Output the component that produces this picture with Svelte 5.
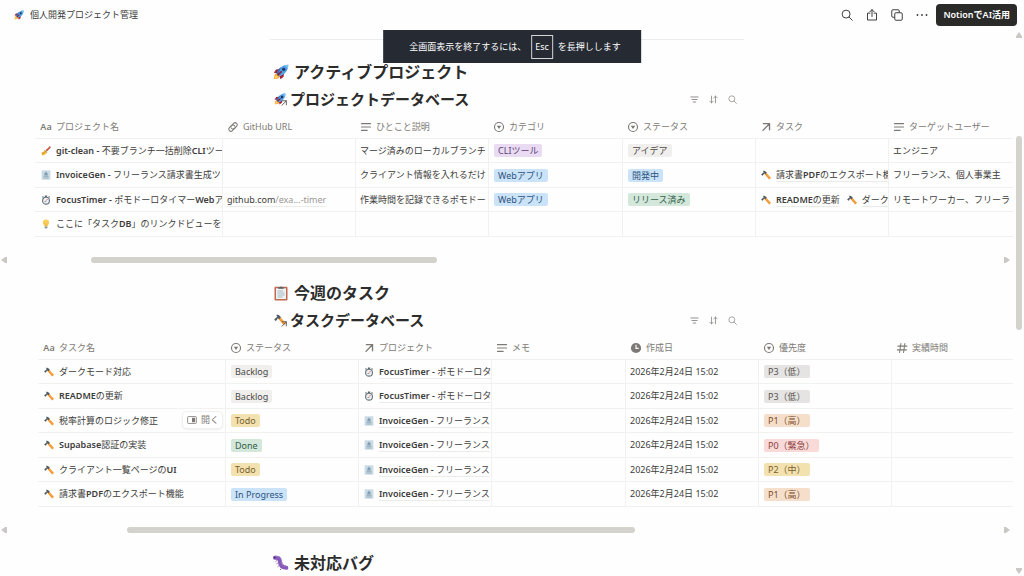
<script>
  const PROJECT_COLUMNS = [
    { icon: "title", name: "プロジェクト名" },
    { icon: "link", name: "GitHub URL" },
    { icon: "text", name: "ひとこと説明" },
    { icon: "select", name: "カテゴリ" },
    { icon: "select", name: "ステータス" },
    { icon: "relation", name: "タスク" },
    { icon: "text", name: "ターゲットユーザー" }
  ];

  const TASK_COLUMNS = [
    { icon: "title", name: "タスク名" },
    { icon: "select", name: "ステータス" },
    { icon: "relation", name: "プロジェクト" },
    { icon: "text", name: "メモ" },
    { icon: "clock", name: "作成日" },
    { icon: "select", name: "優先度" },
    { icon: "number", name: "実績時間" }
  ];

  const title = (icon, text, open = false) => ({ type: "title", icon, text, open });
  const tag = (text, color) => ({ type: "tag", text, color });
  const text = (text = "") => ({ type: "text", text });
  const links = (...items) => ({ type: "links", items });

  const web = tag("Webアプリ", "blue");
  const focus = links({ icon: "stopwatch", text: "FocusTimer - ポモドーロタ" });
  const invoice = links({ icon: "receipt", text: "InvoiceGen - フリーランス" });
  const created = text("2026年2月24日 15:02");

  const sections = [
    {
      icon: "rocket",
      heading: "アクティブプロジェクト",
      database: "プロジェクトデータベース",
      inset: "wide",
      columns: PROJECT_COLUMNS,
      scroll: { start: 8.4, size: 34.7 },
      rows: [
        [
          title("broom", "git-clean - 不要ブランチ一括削除CLIツー"),
          text(),
          text("マージ済みのローカルブランチ"),
          tag("CLIツール", "purple"),
          tag("アイデア", "default"),
          text(),
          text("エンジニア")
        ],
        [
          title("receipt", "InvoiceGen - フリーランス請求書生成ツ"),
          text(),
          text("クライアント情報を入れるだけ"),
          web,
          tag("開発中", "blue"),
          links({ icon: "hammer", text: "請求書PDFのエクスポート機" }),
          text("フリーランス、個人事業主")
        ],
        [
          title("stopwatch", "FocusTimer - ポモドーロタイマーWebア"),
          { type: "url", host: "github.com", path: "/exa...-timer" },
          text("作業時間を記録できるポモドー"),
          web,
          tag("リリース済み", "green"),
          links({ icon: "hammer", text: "READMEの更新" }, { icon: "hammer", text: "ダーク" }),
          text("リモートワーカー、フリーラ")
        ],
        [
          title("bulb", "ここに「タスクDB」のリンクドビューを"),
          text(),
          text(),
          text(),
          text(),
          text(),
          text()
        ]
      ]
    },
    {
      icon: "clipboard",
      heading: "今週のタスク",
      database: "タスクデータベース",
      databaseIcon: "hammer",
      inset: "narrow",
      columns: TASK_COLUMNS,
      scroll: { start: 12, size: 51 },
      rows: [
        ["ダークモード対応", tag("Backlog", "default"), focus, tag("P3（低）", "gray")],
        ["READMEの更新", tag("Backlog", "default"), focus, tag("P3（低）", "gray")],
        ["税率計算のロジック修正", tag("Todo", "yellow"), invoice, tag("P1（高）", "orange"), true],
        ["Supabase認証の実装", tag("Done", "green"), invoice, tag("P0（緊急）", "red")],
        ["クライアント一覧ページのUI", tag("Todo", "yellow"), invoice, tag("P2（中）", "yellow")],
        ["請求書PDFのエクスポート機能", tag("In Progress", "blue"), invoice, tag("P1（高）", "orange")]
      ].map(([name, status, project, priority, open]) => [
        title("hammer", name, open),
        status,
        project,
        text(),
        created,
        priority,
        text()
      ])
    }
  ];

  const pageScroll = { start: 18.4, size: 36.7 };

  // odd entries are the latin runs, which are set heavier than the kana
  const runs = (value) => value.split(/([ -~]+)/);
</script>

{#snippet icon(name)}
  <svg class="icon" viewBox="0 0 16 16" aria-hidden="true">
    {#if name === "rocket"}
      <path d="M1 15c0-3 .6-5.200 2.600-6L7 12.500C6.200 14.400 4 15 1 15z" fill="#f9a53a" />
      <path d="M1.500 14.500c.2-1.700.8-2.800 2-3.300l1.500 1.500c-.6 1.100-1.800 1.700-3.500 1.800z" fill="#ffd45c" />
      <path d="M6.500 5 3 5.400.8 8.700l3.500.6zM11 9.500l-.5 3.500-3.200 2.200-.6-3.500z" fill="#a5243d" />
      <path d="M15.300.7c-4.500 0-7.800 2-10.300 5.800L3.600 9.600l2.800 2.800 3.100-1.400c3.800-2.500 5.800-5.800 5.800-10.300z" fill="#4f9fe6" />
      <path d="M3.600 9.600 5 6.500c.9-1.400 1.900-2.500 3-3.400L5 11z" fill="#2b6cb0" />
      <path d="M15.300.7c-1.400 0-2.700.2-3.900.6l3.300 3.300c.4-1.200.6-2.500.6-3.900z" fill="#7cc0f5" />
      <circle cx="10.700" cy="5.300" r="1.600" fill="#1d3557" />
      <path d="m4 10.800 4.200-4 1 1-4 4.200z" fill="#8d1f38" />
    {:else if name === "hammer"}
      <path d="M5 5.800 7.700 3.400 15.800 12.300 13.200 15z" fill="#f2912f" />
      <path d="m7.200 3.800 8.400 9-.8.700L6.300 4.600z" fill="#ffb04d" />
      <path d="M.2 7.200 2.200 9.300 4.200 7.600 4 6.500 5.500 5.600 6.900 6.800 9.300 4.500 7.800 2.600C6.500 1 4.500.8 2.900 1.500L4.600 3.200 2 5.600z" fill="#4f5b62" />
    {:else if name === "broom"}
      <path d="M14.300.7 15.500 1.900 9.500 8.500 7.800 6.900z" fill="#c8553d" stroke="#c8553d" />
      <path d="M6.500 6.200 10 9.700C8.800 12.800 6 14.500 2.300 15L.8 12.500 1 10.300C3.300 9.700 4.800 8.300 6.500 6.200z" fill="#f6b93b" />
      <path d="m2.300 13.500 4-3.500M1.500 12l3.800-2.800" stroke="#c98a1c" stroke-width=".8" />
      <path d="m5.800 7 3.400 3.400" stroke="#6f9a6a" stroke-width="1.500" />
    {:else if name === "receipt"}
      <path d="M1 .5h14v15H1z" fill="#c9dae4" />
      <path d="M4 10.500h8M4 12.800h8" stroke="#8ba7b7" stroke-width="1.200" />
      <path d="M8 2.500 11 6v3H5V6z" fill="#94afbf" />
      <path d="M8 4v4M6.500 6h3" stroke="#718fa1" stroke-width="1" />
    {:else if name === "stopwatch"}
      <path d="M6.200.8h3.600v2.500H6.200zM11.500 3l1.300-1.300 1.500 1.500L13 4.500zM4.500 3 3.200 1.700 1.700 3.200 3 4.500z" fill="#5d686e" />
      <circle cx="8" cy="9" r="5.500" fill="#eef2f4" stroke="#67747b" stroke-width="1.800" />
      <path d="m8 9 2.500-2.500" stroke="#d84a4a" stroke-width="1.300" />
      <path d="M5.500 10.500h3" stroke="#67747b" stroke-width="1" />
    {:else if name === "bulb"}
      <path d="M8 .8a5 5 0 0 0-5 5c0 2.600 2.200 3.600 2.600 6h4.800c.4-2.400 2.600-3.400 2.600-6a5 5 0 0 0-5-5z" fill="#fbd05a" />
      <path d="M6.200 6.200 7.300 11.500h1.400l1.100-5.300" fill="none" stroke="#f2a93b" />
      <path d="M5.700 12h4.600v1.800L9.200 15.200H6.800L5.700 13.800z" fill="#8a99a1" />
    {:else if name === "clipboard"}
      <rect x="1.500" y="1.800" width="13" height="13.700" rx="1" fill="#c1694f" />
      <path d="M3 3.300h10V14H3z" fill="#eef2f5" />
      <path d="M5.300 3.800V2.200h1.500a1.300 1.300 0 0 1 2.400 0h1.500v1.600z" fill="#53616a" />
      <path d="M4.500 6h5.500M4.500 8h7M4.500 10h7M4.500 12h5" stroke="#9fb2bf" stroke-width=".9" />
    {:else if name === "worm"}
      <path d="M2 2.800C5.500 2 6.800 4.300 7 7.200c.2 3 1.600 5.300 6.300 5.600" fill="none" stroke="#8659ba" stroke-width="4" stroke-linecap="round" />
      <path d="M2.800 1.500c4.200-.3 5.500 2 5.800 5 .2 2.500 1.400 4.200 4.500 4.600" fill="none" stroke="#a07acb" stroke-width="1.300" stroke-dasharray="1.600 .7" />
      <path d="m3.600 5.500-.8 1M4.600 8.200l-1 .6M5.600 11l-.9.800M8 13.800l-.6 1" stroke="#5f3b94" stroke-width="1" />
      <circle cx="1.800" cy="2.500" r=".7" fill="#36204f" />
    {:else if name === "link"}
      <g transform="rotate(-45 8 8)" fill="none" stroke="currentColor" stroke-width="1.400" stroke-linecap="round">
        <path d="M9 10.800H4a2.800 2.800 0 0 1 0-5.600h4a2.800 2.800 0 0 1 2.500 4" />
        <path d="M7 5.200H12a2.800 2.800 0 0 1 0 5.600H8a2.800 2.800 0 0 1-2.500-4" />
      </g>
    {:else if name === "text"}
      <path d="M2 3.500h12M2 8h12M2 12.500h7.500" stroke="currentColor" stroke-width="1.600" stroke-linecap="round" />
    {:else if name === "select"}
      <circle cx="8" cy="8" r="6" fill="none" stroke="currentColor" stroke-width="1.500" />
      <path d="M5 6.200h6L8 10.800z" fill="currentColor" />
    {:else if name === "relation"}
      <path d="M4.500 3.500h8.200v8.200M12.500 3.700 4 12.500" fill="none" stroke="currentColor" stroke-width="1.800" stroke-linecap="round" />
    {:else if name === "clock"}
      <circle cx="8" cy="8" r="6.800" fill="currentColor" />
      <path d="M8 3.800V8.500h3.500" fill="none" stroke="#fff" stroke-width="1.500" />
    {:else if name === "number"}
      <path d="M6.500 2 4.800 14M11.800 2l-1.700 12M2.500 5.500h12M1.800 10.500h12" stroke="currentColor" stroke-width="1.400" stroke-linecap="round" />
    {:else if name === "search"}
      <circle cx="6.800" cy="6.800" r="5.300" fill="none" stroke="currentColor" stroke-width="1.300" />
      <path d="m10.700 10.700 4.300 4.300" stroke="currentColor" stroke-width="1.300" stroke-linecap="round" />
    {:else if name === "share"}
      <path d="M5.300 5.500H2V14.700h12V5.500h-3.300M8 10V1M5 3.800l3-3 3 3" fill="none" stroke="currentColor" stroke-width="1.300" stroke-linecap="round" stroke-linejoin="round" />
    {:else if name === "duplicate"}
      <rect x="5" y="5" width="10" height="10" rx="1.500" fill="none" stroke="currentColor" stroke-width="1.300" />
      <path d="M5 11H2.500A1.500 1.500 0 0 1 1 9.500V2.500A1.500 1.500 0 0 1 2.500 1h7A1.500 1.500 0 0 1 11 2.500V5" fill="none" stroke="currentColor" stroke-width="1.300" />
    {:else if name === "more"}
      <path d="M2 8h.01M8 8h.01M14 8h.01" stroke="currentColor" stroke-width="2.400" stroke-linecap="round" />
    {:else if name === "filter"}
      <path d="M1.500 3.500h13M3.500 8h9M5.800 12.500h4.400" stroke="currentColor" stroke-width="1.600" stroke-linecap="round" />
    {:else if name === "sort"}
      <path d="M4.500 2v12M1.500 11l3 3 3-3M11.500 14V2M8.500 5l3-3 3 3" fill="none" stroke="currentColor" stroke-width="1.500" stroke-linecap="round" stroke-linejoin="round" />
    {:else if name === "peek"}
      <rect x="1" y="2.500" width="14" height="11" rx="1.200" fill="none" stroke="currentColor" stroke-width="1.300" />
      <path d="M8 4.500h5v7H8z" fill="currentColor" />
    {/if}
  </svg>
{/snippet}

{#snippet mixed(value)}
  <span class="mixed"
    >{#each runs(value) as run, i}{#if i % 2}<b>{run}</b>{:else}{run}{/if}{/each}</span
  >
{/snippet}

<div class="app">
  <header class="topbar">
    <a class="crumb" href="#top">
      {@render icon("rocket")}
      <span>個人開発プロジェクト管理</span>
    </a>
    <nav class="actions" aria-label="ページ">
      <button aria-label="検索">{@render icon("search")}</button>
      <button aria-label="共有">{@render icon("share")}</button>
      <button aria-label="複製">{@render icon("duplicate")}</button>
      <button aria-label="その他">{@render icon("more")}</button>
      <button class="cta">NotionでAI活用</button>
    </nav>
  </header>

  <div class="notice" role="status">
    <span>全画面表示を終了するには、</span>
    <kbd>Esc</kbd>
    <span>を長押しします</span>
  </div>

  <div class="viewport">
    <main id="top">
      <hr class="column" />
      {#each sections as section}
        <section>
          <h2 class="column">{@render icon(section.icon)}{section.heading}</h2>
          <div class="column database">
            <h3>
              <span class="linked">
                {@render icon(section.databaseIcon ?? section.icon)}
                <span class="arrow">{@render icon("relation")}</span>
              </span>
              {section.database}
            </h3>
            <button aria-label="フィルター">{@render icon("filter")}</button>
            <button aria-label="並べ替え">{@render icon("sort")}</button>
            <button aria-label="検索">{@render icon("search")}</button>
          </div>

          <div class="sheet {section.inset}">
            <table>
              <colgroup>
                <col class="first" />
                {#each section.columns.slice(2) as _}
                  <col class="mid" />
                {/each}
                <col />
              </colgroup>
              <thead>
                <tr>
                  {#each section.columns as column}
                    <th scope="col">
                      <div class="cell">
                        {#if column.icon === "title"}
                          <span class="aa" aria-hidden="true">Aa</span>
                        {:else}
                          {@render icon(column.icon)}
                        {/if}
                        {column.name}
                      </div>
                    </th>
                  {/each}
                </tr>
              </thead>
              <tbody>
                {#each section.rows as row}
                  <tr>
                    {#each row as cell}
                      <td>
                        <div class="cell">
                          {#if cell.type === "title"}
                            {@render icon(cell.icon)}
                            {@render mixed(cell.text)}
                            {#if cell.open}
                              <button class="open">{@render icon("peek")}開く</button>
                            {/if}
                          {:else if cell.type === "tag"}
                            <span class="tag {cell.color}">{cell.text}</span>
                          {:else if cell.type === "url"}
                            <a class="url" href="#top">{cell.host}<span>{cell.path}</span></a>
                          {:else if cell.type === "links"}
                            {#each cell.items as item}
                              <a class="relation" href="#top">
                                {@render icon(item.icon)}
                                {@render mixed(item.text)}
                              </a>
                            {/each}
                          {:else}
                            {cell.text}
                          {/if}
                        </div>
                      </td>
                    {/each}
                  </tr>
                {/each}
              </tbody>
            </table>
          </div>

          <div class="hscroll">
            <i class="left"></i>
            <div class="track">
              <div
                class="thumb"
                style="margin-left: {section.scroll.start}%; width: {section.scroll.size}%"
              ></div>
            </div>
            <i class="right"></i>
          </div>
        </section>
      {/each}
      <h2 class="column">{@render icon("worm")}未対応バグ</h2>
    </main>

    <div class="vscroll">
      <i class="up"></i>
      <div class="track">
        <div style="height: {pageScroll.start}%"></div>
        <div class="thumb" style="height: {pageScroll.size}%"></div>
      </div>
      <i class="down"></i>
    </div>
  </div>
</div>

<style>
  :global(body) {
    background: #fefefe;
  }

  .app {
    display: flex;
    flex-direction: column;
    height: 100vh;
    overflow: hidden;
    position: relative;
    color: #3c3c3a;
    font: 9px/14px "Noto Sans", "Noto Sans CJK JP", sans-serif;
  }

  button {
    display: flex;
    align-items: center;
    justify-content: center;
    padding: 0;
    border: 0;
    background: none;
    color: inherit;
    font: inherit;
    cursor: pointer;
  }

  a {
    color: inherit;
    text-decoration: none;
  }

  .icon {
    flex: none;
    display: block;
    width: 12px;
    height: 12px;
  }

  .topbar {
    flex: none;
    display: flex;
    align-items: center;
    justify-content: space-between;
    height: 30px;
    padding: 0 7px 0 14px;
  }
  .crumb {
    display: flex;
    align-items: center;
    gap: 6px;
  }
  .crumb .icon {
    width: 10px;
    height: 10px;
  }
  .actions {
    display: flex;
    align-items: center;
  }
  .actions button {
    width: 25px;
    height: 22px;
  }
  .actions .cta {
    width: auto;
    margin-left: 2px;
    padding: 0 7px;
    border-radius: 4px;
    background: #2a2a28;
    color: #fff;
    font-weight: 600;
  }

  .notice {
    position: absolute;
    z-index: 2;
    top: 30px;
    left: 50%;
    transform: translateX(-50%);
    display: flex;
    align-items: center;
    gap: 5px;
    height: 33px;
    padding: 0 20px 0 26px;
    background: #262a33;
    color: #fff;
    white-space: nowrap;
  }
  .notice kbd {
    padding: 4px 3px;
    border: 1px solid #d4d5d7;
    font: inherit;
  }

  .viewport {
    flex: 1;
    min-height: 0;
    display: flex;
  }
  main {
    flex: 1;
    min-width: 0;
    overflow: hidden;
  }

  .column {
    box-sizing: border-box;
    max-width: 474px;
    margin: 0 auto;
  }
  hr.column {
    margin: 9px auto 18px;
    border: 0;
    border-top: 1px solid #ececea;
  }

  h2 {
    display: flex;
    align-items: center;
    gap: 5px;
    height: 28px;
    padding-left: 3px;
    color: #2c2c2b;
    font-size: 16px;
    font-weight: 700;
  }
  h2 .icon {
    width: 16px;
    height: 16px;
  }

  .database {
    display: flex;
    align-items: center;
    gap: 1px;
    height: 26px;
    padding: 0 3px 0 4px;
    color: #8b8883;
  }
  .database button {
    width: 18px;
    height: 18px;
  }
  .database button .icon {
    width: 9px;
    height: 9px;
  }
  h3 {
    flex: 1;
    display: flex;
    align-items: center;
    gap: 2px;
    margin: 0;
    color: #2c2c2b;
    font-size: 15px;
    font-weight: 700;
  }
  .linked {
    position: relative;
    width: 14px;
  }
  .linked .arrow {
    position: absolute;
    right: 0;
    bottom: -2px;
    color: #555;
  }
  .linked .arrow .icon {
    width: 8px;
    height: 8px;
  }

  .sheet {
    margin-top: 4px;
    padding-left: 35px;
    padding-right: 1px;
  }
  .sheet.narrow {
    padding-left: 38px;
  }
  table {
    width: 100%;
    table-layout: fixed;
    border-collapse: separate;
    border-spacing: 0;
  }
  .first {
    width: 187px;
  }
  .mid {
    width: 133px;
  }
  .mid:nth-child(4) {
    width: 134px;
  }
  th,
  td {
    box-sizing: border-box;
    height: 24px;
    padding: 0;
    border-bottom: 1px solid #f1f1ef;
    position: relative;
  }
  th {
    height: 23px;
    color: #7d7a75;
    font-weight: 400;
  }
  td + td {
    border-left: 1px solid #f1f1ef;
  }
  tr:nth-child(even) td {
    height: 25px;
  }
  .cell {
    display: flex;
    align-items: center;
    gap: 4px;
    padding-left: 5px;
    overflow: hidden;
    white-space: nowrap;
  }
  td + td .cell {
    padding-left: 4px;
  }
  td .icon {
    box-sizing: border-box;
    padding: 1px;
  }
  .aa {
    flex: none;
    width: 12px;
    font-weight: 600;
  }
  .mixed {
    white-space: pre;
  }
  .mixed b {
    font-weight: 600;
  }

  .relation {
    flex: none;
    display: flex;
    align-items: center;
    gap: 4px;
  }
  .relation + .relation {
    margin-left: 2px;
  }
  .relation .mixed,
  .url {
    text-decoration: underline #ebebe9;
    text-underline-offset: 3px;
  }
  .url span {
    color: #9b9894;
  }

  .open {
    position: absolute;
    top: 3px;
    right: 3px;
    gap: 3px;
    padding: 1px 3px;
    border-radius: 4px;
    background: #fff;
    box-shadow: 0 0 0 1px #f0f0ee, 0 1px 3px #0002;
    color: #7d7a75;
  }

  .tag {
    margin-left: 1px;
    padding: 0 4px;
    border-radius: 2px;
    line-height: 13px;
  }
  .default {
    background: #f0efed;
    color: #4a4946;
  }
  .gray {
    background: #e5e4e2;
    color: #55534f;
  }
  .purple {
    background: #e9dcf2;
    color: #613f78;
  }
  .blue {
    background: #cbe3f8;
    color: #2b5380;
  }
  .green {
    background: #d3e7db;
    color: #326149;
  }
  .yellow {
    background: #f3e2b0;
    color: #77602c;
  }
  .orange {
    background: #f5dfcb;
    color: #7d4d2a;
  }
  .red {
    background: #fadad8;
    color: #8a3f3c;
  }

  .hscroll {
    display: flex;
    align-items: center;
    margin: 20px 4px 16px 1px;
    height: 6px;
  }
  .track {
    flex: 1;
  }
  .thumb {
    border-radius: 3px;
    background: #d3d2cd;
  }
  .hscroll .thumb {
    height: 6px;
  }

  .vscroll {
    flex: none;
    display: flex;
    flex-direction: column;
    align-items: center;
    width: 10px;
    padding: 2px 0;
  }
  .vscroll .thumb {
    width: 6px;
  }

  i {
    flex: none;
    width: 6px;
    height: 6px;
    background: #c9c8c5;
  }
  .left {
    clip-path: polygon(100% 0, 70% 0, 0 50%, 70% 100%, 100% 100%);
  }
  .right {
    clip-path: polygon(0 0, 30% 0, 100% 50%, 30% 100%, 0 100%);
  }
  .up {
    clip-path: polygon(0 100%, 0 70%, 50% 0, 100% 70%, 100% 100%);
  }
  .down {
    clip-path: polygon(0 0, 0 30%, 50% 100%, 100% 30%, 100% 0);
  }
</style>
